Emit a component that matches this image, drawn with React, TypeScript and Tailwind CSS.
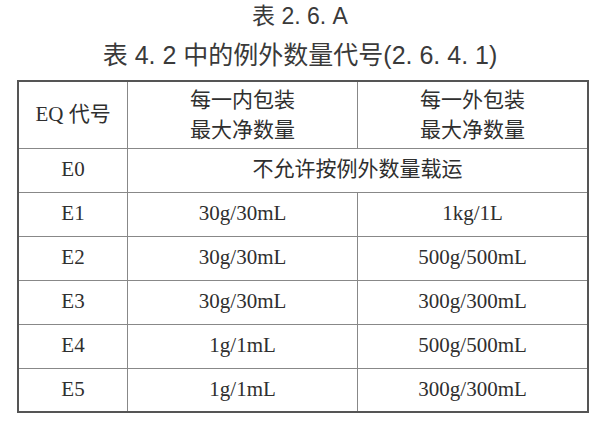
const SERIF = "font-['Liberation_Serif','Noto_Sans_CJK_SC',serif]";

const ROWS: [string, string, string][] = [
  ["E1", "30g/30mL", "1kg/1L"],
  ["E2", "30g/30mL", "500g/500mL"],
  ["E3", "30g/30mL", "300g/300mL"],
  ["E4", "1g/1mL", "500g/500mL"],
  ["E5", "1g/1mL", "300g/300mL"],
];

export default function App() {
  return (
    <div className="w-[600px] h-[428px] bg-white text-[#2f2f2f] overflow-hidden">
      <div className="font-['Liberation_Sans','Noto_Sans_CJK_SC',sans-serif] text-center text-[#3a3a3a]">
        <div className="pt-[3px] text-[23px] leading-[26px]">表 2. 6. A</div>
        <div className="mt-[11px] text-[25px] leading-[30px]">表 4. 2 中的例外数量代号(2. 6. 4. 1)</div>
      </div>
      <table className={`mt-[10px] ml-[17px] w-[572px] border-collapse border-2 border-[#555] text-[21px] text-center ${SERIF}`}>
        <colgroup>
          <col className="w-[110px]" />
          <col className="w-[231px]" />
          <col className="w-[231px]" />
        </colgroup>
        <tbody>
          <tr className="h-[67px]">
            <td className="border border-[#888]">EQ 代号</td>
            <td className="border border-[#888] leading-[30px]">每一内包装<br />最大净数量</td>
            <td className="border border-[#888] leading-[30px]">每一外包装<br />最大净数量</td>
          </tr>
          <tr className="h-[44px]">
            <td className="border border-[#888]">E0</td>
            <td colSpan={2} className="border border-[#888]">不允许按例外数量载运</td>
          </tr>
          {ROWS.map(([code, inner, outer]) => (
            <tr key={code} className="h-[44px]">
              <td className="border border-[#888]">{code}</td>
              <td className="border border-[#888]">{inner}</td>
              <td className="border border-[#888]">{outer}</td>
            </tr>
          ))}
        </tbody>
      </table>
    </div>
  );
}
